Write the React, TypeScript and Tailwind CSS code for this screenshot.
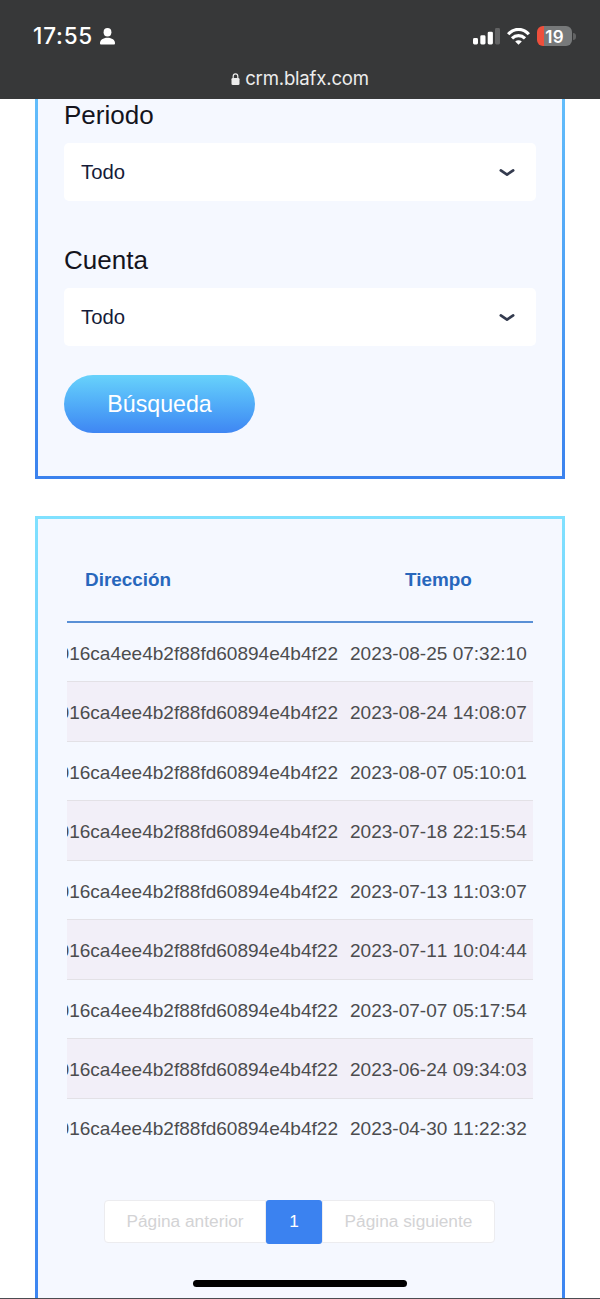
interface SelectFieldProps {
  label: string;
  value: string;
}

const ADDRESS = "016ca4ee4b2f88fd60894e4b4f22";

const rows = [
  "2023-08-25 07:32:10",
  "2023-08-24 14:08:07",
  "2023-08-07 05:10:01",
  "2023-07-18 22:15:54",
  "2023-07-13 11:03:07",
  "2023-07-11 10:04:44",
  "2023-07-07 05:17:54",
  "2023-06-24 09:34:03",
  "2023-04-30 11:22:32",
];

function StatusBar() {
  return (
    <header className="flex h-[99px] shrink-0 flex-col bg-[#373839] font-['Inter',sans-serif] text-white">
      <div className="flex h-[58px] items-end justify-between pr-[24px] pl-[33px]">
        <div className="flex h-[44px] items-center gap-[7px]">
          <span className="w-[60px] text-[22.5px] font-medium whitespace-nowrap tracking-[0.8px]">
            17:55
          </span>
          <svg width="15" height="17" viewBox="0 0 15 17" fill="currentColor">
            <ellipse cx="7.5" cy="4.3" rx="3.9" ry="4.2" />
            <path d="M0 15.2C0 12 3 9.7 7.5 9.7S15 12 15 15.2c0 .9-.4 1.3-1.3 1.3H1.3C.4 16.5 0 16.1 0 15.2Z" />
          </svg>
        </div>
        <div className="flex h-[44px] items-center">
          <svg width="27" height="17" viewBox="0 0 27 17" fill="currentColor">
            <rect x="0" y="10" width="5" height="6.5" rx="1.4" />
            <rect x="7.3" y="7.3" width="5.2" height="9.2" rx="1.4" />
            <rect x="14.7" y="3.7" width="5.2" height="12.8" rx="1.4" />
            <rect x="22" y="0" width="5" height="16.5" rx="1.4" opacity="0.22" />
          </svg>
          <svg className="ml-[7px]" width="23" height="17" viewBox="0 0 23 17">
            <g fill="none" stroke="currentColor" strokeWidth="3.2">
              <path d="M1.2 6.2C7-.2 16-.2 21.8 6.2" />
              <path d="M5 10.4c3.8-3.7 9.2-3.7 13 0" />
            </g>
            <path fill="currentColor" d="M8.2 13.4c1.9-1.6 4.7-1.6 6.6 0L11.5 16.8Z" />
          </svg>
          <div className="ml-[7px] flex h-[20px] w-[35px] items-center justify-center rounded-[6px] bg-[linear-gradient(90deg,#ee4f3c_0_6.5px,#77797a_6.5px)] text-[17px] leading-[20px] font-semibold">
            <span className="mt-px tracking-[0.3px]">19</span>
          </div>
          <span className="ml-px h-[7px] w-[3px] rounded-r-full bg-[#626364]" />
        </div>
      </div>
      <div className="flex h-[41px] items-center justify-center gap-[5px] pt-px text-[#ececec]">
        <svg width="9" height="12" viewBox="0 0 9 12">
          <rect x="0.5" y="5" width="8" height="7" rx="1.3" fill="currentColor" />
          <path d="M2.2 5.5V3.2a2.3 2.3 0 0 1 4.6 0v2.3" fill="none" stroke="currentColor" strokeWidth="1.2" />
        </svg>
        <span className="text-[18.6px] tracking-[-0.2px] whitespace-nowrap">crm.blafx.com</span>
      </div>
    </header>
  );
}

function SelectField({ label, value }: SelectFieldProps) {
  return (
    <div>
      <label className="block h-[44px] text-[26px] leading-[32px] text-[#14141d]">{label}</label>
      <button className="flex h-[58px] w-full items-center justify-between rounded-[5px] bg-white pr-[21px] pl-[17px] text-[20.3px] text-[#151b38]">
        <span>{value}</span>
        <svg width="16" height="9" viewBox="0 0 16 9" fill="none">
          <path
            d="M1.8 2.4 8 6.6l6.2-4.2"
            stroke="#343b4f"
            strokeWidth="2.7"
            strokeLinecap="round"
            strokeLinejoin="round"
          />
        </svg>
      </button>
    </div>
  );
}

function Pagination() {
  return (
    <nav className="flex items-center justify-center pr-px text-[17.3px] leading-[20px]">
      <button className="h-[43px] w-[162px] rounded-l-[4px] border border-[#ececef] bg-white pb-px text-[#d3d3d5]">
        Página anterior
      </button>
      <button className="h-[44px] w-[56px] rounded-[3px] bg-[#3b82f0] pb-px text-white">1</button>
      <button className="h-[43px] w-[173px] rounded-r-[4px] border border-[#ececef] bg-white pb-px text-[#d3d3d5]">
        Página siguiente
      </button>
    </nav>
  );
}

export default function App() {
  return (
    <div className="relative flex h-[1299px] w-[600px] flex-col overflow-hidden bg-white font-['Liberation_Sans',Arial,sans-serif]">
      <StatusBar />

      <main className="flex flex-col gap-[37px] px-[35px]">
        <section className="bg-linear-to-b from-[#62bdfb] to-[#3b82ee] px-[3px] pb-[3px]">
          <div className="flex h-[377px] flex-col bg-[#f5f8ff] px-[26px]">
            <SelectField label="Periodo" value="Todo" />
            <div className="mt-[43px]">
              <SelectField label="Cuenta" value="Todo" />
            </div>
            <button className="mt-[29px] h-[58px] w-[191px] rounded-full bg-linear-to-b from-[#68d2fb] to-[#3f86f3] pt-px text-[23.2px] text-white">
              Búsqueda
            </button>
          </div>
        </section>

        <section className="bg-linear-to-b from-[#80e1ff] to-[#3b82f0] p-[3px]">
          <div className="h-[800px] bg-[#f5f8ff] px-[29px]">
            <div className="flex h-[104px] items-center border-b-2 border-[#5990d6] pt-[21px] text-[18.9px] font-bold text-[#2867bc]">
              <span className="w-[277px] pl-[18px]">Dirección</span>
              <span className="flex-1 text-center">Tiempo</span>
            </div>
            <div>
              {rows.map((time) => (
                <div
                  key={time}
                  className="flex h-[59.44px] items-center border-b border-[#e3e1e6] pt-[4px] text-[19.05px] whitespace-nowrap text-[#4c4c4e] [font-kerning:none] last:border-transparent even:bg-[#f2eff8]"
                >
                  <span className="flex w-[271px] justify-end overflow-hidden">{ADDRESS}</span>
                  <span className="ml-[12px]">{time}</span>
                </div>
              ))}
            </div>
            <div className="mt-[42px]">
              <Pagination />
            </div>
          </div>
        </section>
      </main>

      <div className="absolute bottom-[12px] left-[193px] h-[7px] w-[214px] rounded-full bg-black" />
      <div className="absolute bottom-0 left-0 h-px w-full bg-[#4b4c52]" />
    </div>
  );
}
